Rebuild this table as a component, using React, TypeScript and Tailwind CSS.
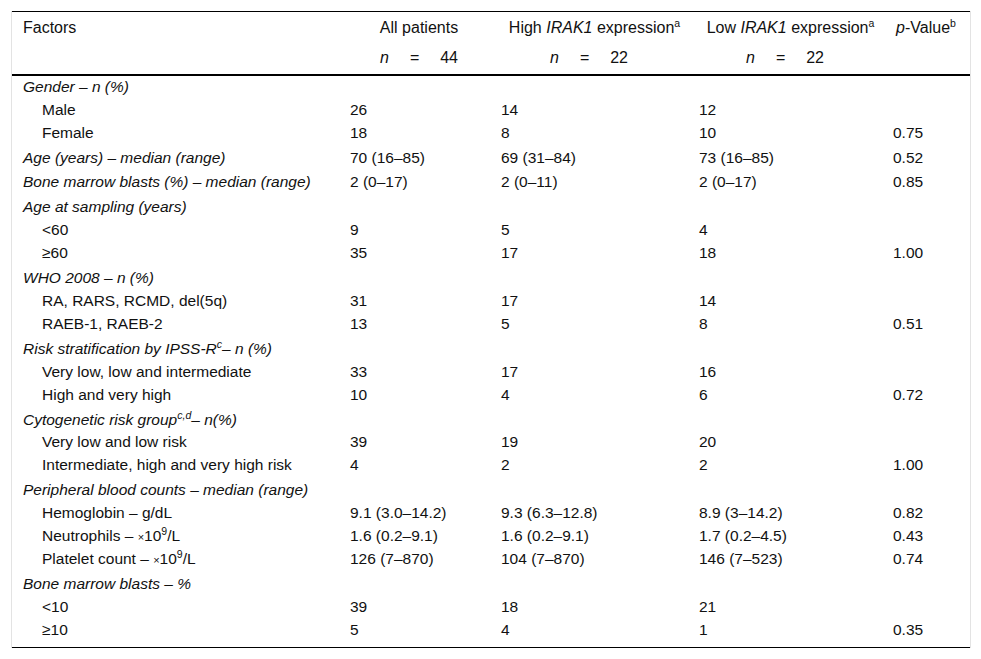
import React from 'react';

type Row = {
  label: React.ReactNode;
  cat?: boolean;
  first?: boolean;
  all?: string;
  high?: string;
  low?: string;
  p?: string;
};

// raised text without growing the line box
const Sup = ({ children }: { children: React.ReactNode }) => (
  <span className="relative -top-[6px] text-[10.5px] leading-none">{children}</span>
);

const Times = () => <span className="text-[11px] leading-none">×</span>;

const rows: Row[] = [
  { label: 'Gender – n (%)', cat: true, first: true },
  { label: 'Male', all: '26', high: '14', low: '12' },
  { label: 'Female', all: '18', high: '8', low: '10', p: '0.75' },
  { label: 'Age (years) – median (range)', cat: true, all: '70 (16–85)', high: '69 (31–84)', low: '73 (16–85)', p: '0.52' },
  { label: 'Bone marrow blasts (%) – median (range)', cat: true, all: '2 (0–17)', high: '2 (0–11)', low: '2 (0–17)', p: '0.85' },
  { label: 'Age at sampling (years)', cat: true },
  { label: '<60', all: '9', high: '5', low: '4' },
  { label: '≥60', all: '35', high: '17', low: '18', p: '1.00' },
  { label: 'WHO 2008 – n (%)', cat: true },
  { label: 'RA, RARS, RCMD, del(5q)', all: '31', high: '17', low: '14' },
  { label: 'RAEB-1, RAEB-2', all: '13', high: '5', low: '8', p: '0.51' },
  {
    label: (
      <>
        Risk stratification by IPSS-R<Sup>c</Sup>– n (%)
      </>
    ),
    cat: true,
  },
  { label: 'Very low, low and intermediate', all: '33', high: '17', low: '16' },
  { label: 'High and very high', all: '10', high: '4', low: '6', p: '0.72' },
  {
    label: (
      <>
        Cytogenetic risk group<Sup>c,d</Sup>– n(%)
      </>
    ),
    cat: true,
  },
  { label: 'Very low and low risk', all: '39', high: '19', low: '20' },
  { label: 'Intermediate, high and very high risk', all: '4', high: '2', low: '2', p: '1.00' },
  { label: 'Peripheral blood counts – median (range)', cat: true },
  { label: 'Hemoglobin – g/dL', all: '9.1 (3.0–14.2)', high: '9.3 (6.3–12.8)', low: '8.9 (3–14.2)', p: '0.82' },
  {
    label: (
      <>
        Neutrophils – <Times />10<Sup>9</Sup>/L
      </>
    ),
    all: '1.6 (0.2–9.1)',
    high: '1.6 (0.2–9.1)',
    low: '1.7 (0.2–4.5)',
    p: '0.43',
  },
  {
    label: (
      <>
        Platelet count – <Times />10<Sup>9</Sup>/L
      </>
    ),
    all: '126 (7–870)',
    high: '104 (7–870)',
    low: '146 (7–523)',
    p: '0.74',
  },
  { label: 'Bone marrow blasts – %', cat: true },
  { label: '<10', all: '39', high: '18', low: '21' },
  { label: '≥10', all: '5', high: '4', low: '1', p: '0.35' },
];

const N = ({ v }: { v: string }) => (
  <span className="whitespace-nowrap">
    <i>n</i>
    <span className="inline-block w-[21px]" />=<span className="inline-block w-[21px]" />
    {v}
  </span>
);

export default function App() {
  return (
    <div className="min-h-screen bg-white pt-[11px] pl-[11px] pr-[10px]">
      <div
        className="border-x border-[#e3e3e3] text-[15.5px] leading-[22.9px] text-[#111]"
        style={{ fontFamily: '"Liberation Sans", Arial, sans-serif' }}
      >
        <table className="w-full border-collapse table-fixed">
          <colgroup>
            <col className="w-[327px]" />
            <col className="w-[151px]" />
            <col className="w-[198px]" />
            <col className="w-[194px]" />
            <col className="w-[88px]" />
          </colgroup>
          <thead className="text-[16px]">
            <tr className="border-t border-black">
              <th className="text-left font-normal px-[11px] pt-[5px] pb-[2px] align-top">Factors</th>
              <th className="text-center font-normal pl-[11px] pr-[2px] pt-[5px] pb-[2px] whitespace-nowrap">All patients</th>
              <th className="text-center font-normal pl-[11px] pr-0 pt-[5px] pb-[2px] whitespace-nowrap">
                High <i>IRAK1</i> expression<Sup>a</Sup>
              </th>
              <th className="text-center font-normal pl-[11px] pr-0 pt-[5px] pb-[2px] whitespace-nowrap">
                Low <i>IRAK1</i> expression<Sup>a</Sup>
              </th>
              <th className="text-center font-normal px-[4px] pt-[5px] pb-[2px] whitespace-nowrap">
                <i>p</i>-Value<Sup>b</Sup>
              </th>
            </tr>
            <tr className="border-b-2 border-black">
              <th className="px-[11px] pt-[5px] pb-[4px]" />
              <th className="font-normal text-center pl-[11px] pr-[2px] pt-[5px] pb-[4px]">
                <N v="44" />
              </th>
              <th className="font-normal text-center px-[11px] pt-[5px] pb-[4px]">
                <N v="22" />
              </th>
              <th className="font-normal text-center px-[11px] pt-[5px] pb-[4px]">
                <N v="22" />
              </th>
              <th className="pt-[5px] pb-[4px]" />
            </tr>
          </thead>
          <tbody className="border-b border-black">
            {rows.map((r, i) => {
              const pad = r.cat && !r.first ? 'pt-[2px]' : 'pt-0';
              const last = i === rows.length - 1 ? 'pb-[5px]' : 'pb-0';
              const cell = `${pad} ${last} px-[11px] align-top whitespace-nowrap`;
              return (
                <tr key={i}>
                  <td className={`${cell} ${r.cat ? 'italic' : 'pl-[30px]'}`}>{r.label}</td>
                  <td className={cell}>{r.all}</td>
                  <td className={cell}>{r.high}</td>
                  <td className={cell}>{r.low}</td>
                  <td className={cell}>{r.p}</td>
                </tr>
              );
            })}
          </tbody>
        </table>
      </div>
    </div>
  );
}
